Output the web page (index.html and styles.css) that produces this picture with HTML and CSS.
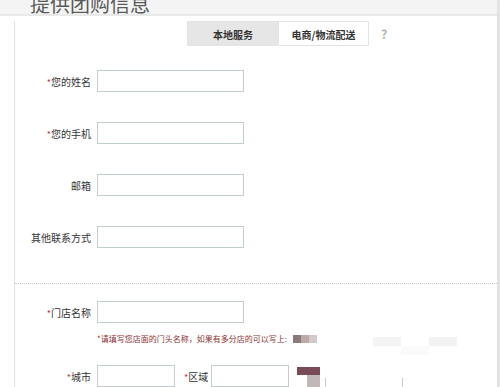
FILE: index.html
```html
<!DOCTYPE html>
<html lang="zh-CN">
<head>
    <meta charset="UTF-8">
    <title>提供团购信息</title>
    <link rel="stylesheet" href="styles.css">
</head>
<body>
<div class="page">
    <div class="title-bar">
        <h1 class="title">提供团购信息</h1>
    </div>

    <div class="panel">
        <div class="tabs">
            <span class="tab tab-active">本地服务</span>
            <span class="tab">电商/物流配送</span>
            <span class="help">?</span>
        </div>

        <!-- contact info -->
        <div class="section section-contact">
            <div class="row">
                <label class="label"><em>*</em>您的姓名</label>
                <input class="field" type="text">
            </div>
            <div class="row">
                <label class="label"><em>*</em>您的手机</label>
                <input class="field" type="text">
            </div>
            <div class="row">
                <label class="label">邮箱</label>
                <input class="field" type="text">
            </div>
            <div class="row">
                <label class="label">其他联系方式</label>
                <input class="field" type="text">
            </div>
        </div>

        <!-- shop info -->
        <div class="section section-shop">
            <div class="row row-shop">
                <label class="label"><em>*</em>门店名称</label>
                <input class="field" type="text">
            </div>
            <div class="hint">
                <span class="hint-text">*请填写您店面的门头名称，如果有多分店的可以写上:</span>
                <span class="blur">
                    <i class="px px-a"></i><i class="px px-b"></i><i class="px px-c"></i>
                </span>
                <span class="haze">
                    <i class="hz hz-1"></i><i class="hz hz-2"></i><i class="hz hz-3"></i>
                </span>
            </div>
            <div class="row row-city">
                <label class="label"><em>*</em>城市</label>
                <input class="field field-small" type="text">
                <label class="label-inline"><em>*</em>区域</label>
                <input class="field field-small" type="text">
                <span class="blur blur-stack">
                    <i class="px px-d"></i>
                    <i class="px px-e"></i>
                </span>
                <span class="street"></span>
            </div>
        </div>
    </div>
</div>
</body>
</html>
```

FILE: styles.css
```css
body {
    margin: 0;
    background: #fff;
    font-family: "Noto Sans CJK SC", "Noto Sans", sans-serif;
    color: #333;
}

.page {
    width: 497px;
    height: 387px;
    border-right: 3px solid #e3e3e3;
    overflow: hidden;
}

.title-bar {
    height: 14px;
    padding-left: 30px;
    background: #f4f4f4;
    border-bottom: 2px solid #e9e9e9;
    overflow: hidden;
}

.title {
    margin: -7px 0 0;
    font-size: 20px;
    line-height: 22px;
    font-weight: normal;
    color: #5a5a5a;
}

.panel {
    margin-left: 14px;
    height: 371px;
    border-left: 1px solid #e0e0e0;
}

.tabs {
    display: flex;
    align-items: center;
    margin: 5px 0 0 172px;
}

.tab {
    box-sizing: border-box;
    width: 91px;
    height: 25px;
    line-height: 25px;
    text-align: center;
    font-size: 10px;
    font-weight: bold;
    color: #333;
    background: #fff;
    border: 1px solid #e4e4e4;
}

.tab-active {
    background: #e6e6e6;
    border-right: none;
}

.help {
    margin-left: 12px;
    font-size: 12px;
    font-weight: bold;
    color: #b0b0b0;
}

.section-contact {
    margin-top: 24px;
    padding-bottom: 5px;
}

.section-shop {
    border-top: 1px dotted #c8c8c8;
    padding-top: 17px;
}

.row {
    display: flex;
    align-items: center;
    height: 22px;
    margin-bottom: 30px;
}

.label {
    width: 76px;
    margin-right: 6px;
    text-align: right;
    font-size: 10px;
    color: #333;
}

.label em,
.label-inline em {
    font-style: normal;
    font-size: 9px;
    color: #c33;
}

.field {
    box-sizing: border-box;
    width: 147px;
    height: 22px;
    margin: 0;
    padding: 0;
    border: 1px solid #c2cece;
    background: #fff;
}

.field-small {
    width: 78px;
    align-self: flex-start;
}

.row-shop {
    margin-bottom: 10px;
}

.hint {
    display: flex;
    align-items: flex-start;
    height: 11px;
    margin-left: 82px;
}

.hint-text {
    font-size: 8px;
    line-height: 11px;
    color: #8c3232;
    white-space: nowrap;
}

.blur {
    display: flex;
    margin-left: 6px;
    margin-top: 2px;
}

.px {
    display: block;
    width: 8px;
    height: 8px;
}

.px-a { background: #8a7a7a; }
.px-b { background: #b9a9a9; }
.px-c { background: #d4c8c8; }

.haze {
    display: flex;
    margin-left: 56px;
    margin-top: 4px;
}

.hz {
    display: block;
    width: 28px;
    height: 9px;
    background: #f4f4f4;
}

.hz-2 { background: #fafafa; margin-top: 9px; }
.hz-3 { background: #f2f2f2; }

.row-city {
    margin-top: 21px;
    align-items: flex-start;
}

.label-inline {
    margin: 4px 3px 0 9px;
    font-size: 10px;
    color: #333;
    white-space: nowrap;
}

.row-city .label {
    margin-top: 4px;
}

.blur-stack {
    flex-direction: column;
    margin-left: 8px;
    margin-top: 2px;
}

.px-d {
    width: 23px;
    background: #7a4a55;
}

.px-e {
    width: 13px;
    height: 12px;
    margin-left: 10px;
    background: #c0b8b8;
}

.street {
    display: block;
    width: 76px;
    height: 12px;
    margin: 13px 0 0 5px;
    border-left: 1px solid #c2cece;
    border-right: 1px solid #c2cece;
}
```
